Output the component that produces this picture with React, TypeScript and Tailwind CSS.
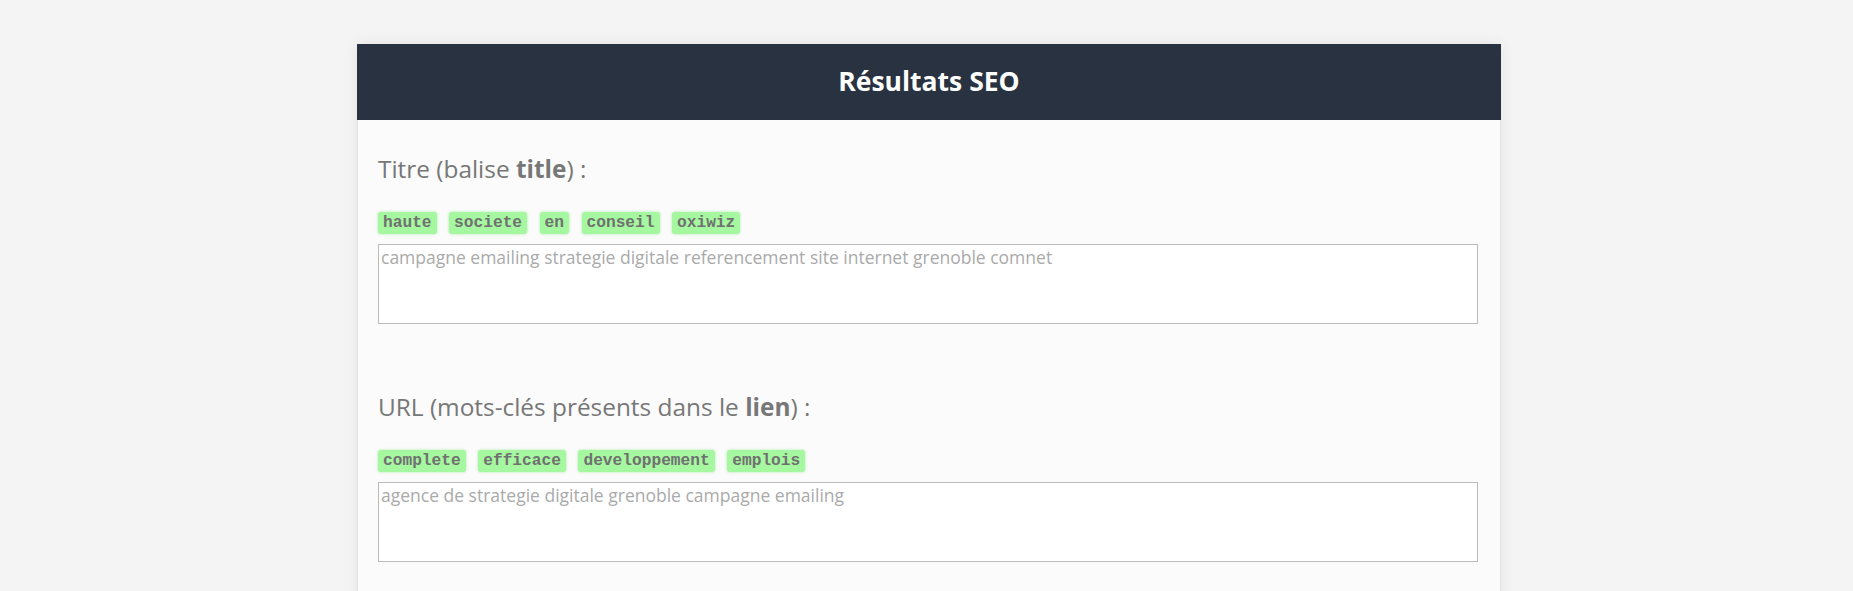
import React from "react";

const sections = [
  {
    id: 1,
    label: "Titre (balise ",
    strong: "title",
    keywords: ["haute", "societe", "en", "conseil", "oxiwiz"],
    placeholder:
      "campagne emailing strategie digitale referencement site internet grenoble comnet",
  },
  {
    id: 2,
    label: "URL (mots-clés présents dans le ",
    strong: "lien",
    keywords: ["complete", "efficace", "developpement", "emplois"],
    placeholder: "agence de strategie digitale grenoble campagne emailing",
  },
];

const Badge = ({ word }: { word: string }) => (
  <span className="flex h-[22px] items-center rounded-[3px] bg-[#a5f7a0] px-[5px] text-[16.2px] font-bold text-[#707070] shadow-[0_0_3px_rgba(110,220,110,0.55)] font-['Liberation_Mono',monospace]">
    {word}
  </span>
);

export default function App() {
  return (
    <div className="h-[591px] overflow-hidden bg-[#f4f4f4] pt-[44px] font-['Open_Sans','Noto_Sans',sans-serif]">
      <div className="ml-[357px] w-[1144px] shadow-[0_0_14px_rgba(0,0,0,0.07)]">
        <header className="flex h-[76px] items-center justify-center bg-[#283240]">
          <h1 className="text-[26.5px] font-bold text-white">Résultats SEO</h1>
        </header>
        <div className="h-[500px] border-x border-[#e2e2e2] bg-[#fbfbfb] pl-[20px] pr-[22px] pt-[33px]">
          {sections.map((s) => (
            <section key={s.id} className="mb-[67px]">
              <h2 className="text-[24.4px] leading-[32px] text-[#777]">
                {s.label}
                <strong className="font-bold">{s.strong}</strong>) :
              </h2>
              <div className="mt-[27px] flex gap-[12.5px]">
                {s.keywords.map((k) => (
                  <Badge key={k} word={k} />
                ))}
              </div>
              <textarea
                readOnly
                placeholder={s.placeholder}
                className="mt-[10px] block h-[80px] w-full resize-none border border-[#bbb] bg-white p-[2px] text-[17.5px] leading-[21px] outline-none placeholder:text-[#aaa]"
              />
            </section>
          ))}
        </div>
      </div>
    </div>
  );
}
